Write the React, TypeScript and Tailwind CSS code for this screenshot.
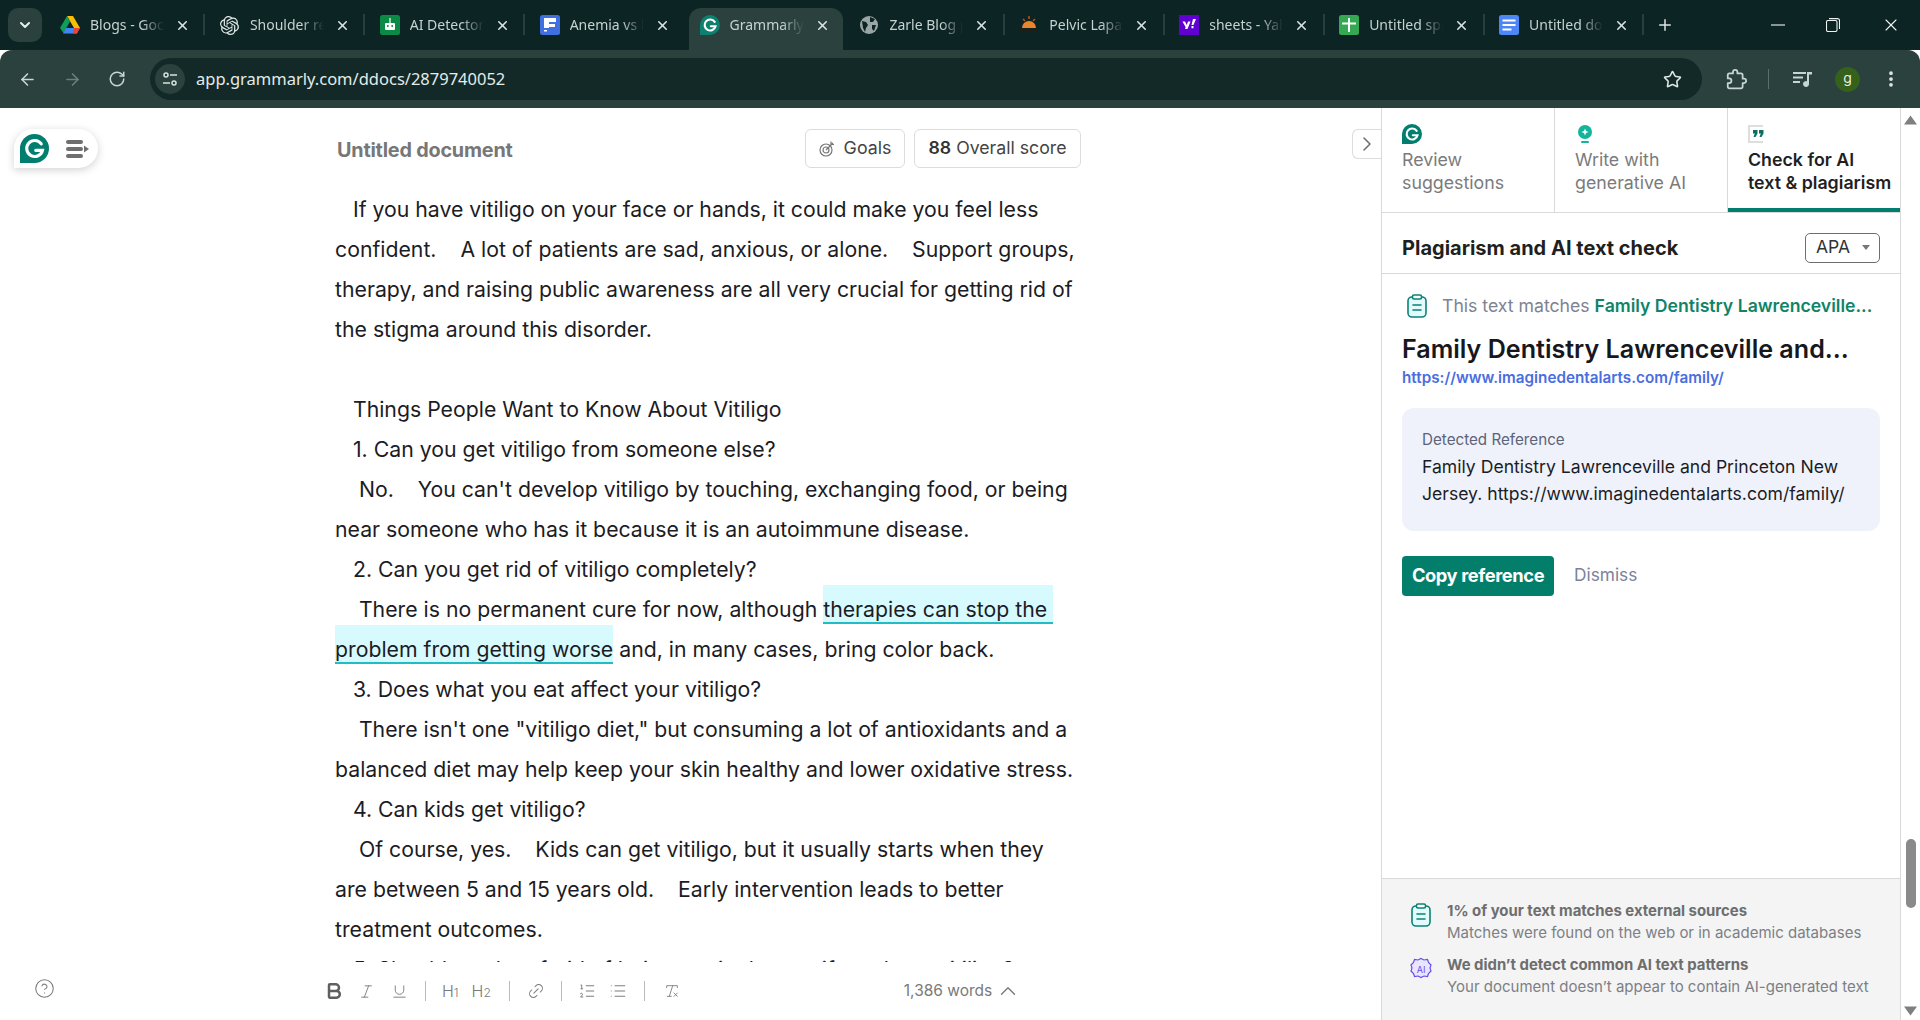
import { ArrowLeft, ArrowRight, ChevronDown, ChevronRight, ChevronUp, EllipsisVertical, Plus, RotateCw, Star, X, Bold, Italic, Underline, Link2, ListOrdered, List, RemoveFormatting, CircleHelp } from "lucide-react";
import { SiOpenai } from "react-icons/si";
import type { ReactNode } from "react";

function GrammarlyLogo({ size = 24, color = "#027e6f" }: { size?: number; color?: string }) {
  return (
    <svg width={size} height={size} viewBox="0 0 24 24">
      <path d="M12 0a12 12 0 1 1 0 24H0V12A12 12 0 0 1 12 0z" fill={color} />
      <path d="M17.6 8.2A6.6 6.6 0 1 0 18.6 13.5H13" fill="none" stroke="#fff" strokeWidth="2.6" strokeLinecap="round" />
    </svg>
  );
}

function DriveIcon() {
  return (
    <svg width="20" height="18" viewBox="0 0 20 18">
      <path d="M7 0h6l7 12h-6z" fill="#fbbc04" />
      <path d="M7 0l3 5.5L3.5 17 0 12z" fill="#0f9d58" />
      <path d="M6 12h14l-3.2 5.5H3z" fill="#4285f4" />
      <path d="M20 12l-3.2 5.5H13l1-5.5z" fill="#ea4335" />
    </svg>
  );
}

function DocIcon({ color, children }: { color: string; children: ReactNode }) {
  return (
    <svg width="20" height="20" viewBox="0 0 20 20">
      <rect width="20" height="20" rx="2.5" fill={color} />
      {children}
    </svg>
  );
}

function ClipboardIcon() {
  return (
    <svg width="20" height="24" viewBox="0 0 20 24" fill="#e2fbfb" stroke="#0b8277" strokeWidth="1.6">
      <rect x="1" y="3" width="18" height="20" rx="4" />
      <rect x="5.5" y="1" width="9" height="4" rx="1.5" fill="#fff" />
      <path d="M6 11h8M6 16h8" strokeLinecap="round" />
    </svg>
  );
}

const tabs: { title: string; icon: ReactNode; active?: boolean; hideSep?: boolean }[] = [
  { title: "Blogs - Google Drive", icon: <DriveIcon /> },
  { title: "Shoulder replacement", icon: <SiOpenai className="h-[19px] w-[19px] text-[#dfe7e5]" /> },
  {
    title: "AI Detector tool",
    icon: (
      <DocIcon color="#0b8a46">
        <rect x="5" y="8" width="10" height="7" rx="1" fill="#fff" />
        <rect x="9.4" y="3" width="1.2" height="5" fill="#fff" />
        <circle cx="7.8" cy="11" r="1" fill="#0b8a46" />
        <circle cx="12.2" cy="11" r="1" fill="#0b8a46" />
      </DocIcon>
    ),
  },
  {
    title: "Anemia vs leukemia",
    icon: (
      <DocIcon color="#3f6fe0">
        <path d="M4 3h12v4H9v2h6v3H9v1H4z" fill="#fff" />
        <rect x="4" y="15" width="3" height="1.5" fill="#fff" />
      </DocIcon>
    ),
    hideSep: true,
  },
  { title: "Grammarly document", icon: <GrammarlyLogo size={20} color="#0d8070" />, active: true, hideSep: true },
  {
    title: "Zarle Blog post",
    icon: (
      <svg width="20" height="20" viewBox="0 0 20 20">
        <circle cx="10" cy="10" r="9" fill="#9aa6a5" />
        <path d="M3 6l4 1 2 3-2 3-1 4-2-4zM11 2l5 2-2 3-3 0zM13 10l4 0-2 6-2-2z" fill="#0c2524" />
      </svg>
    ),
  },
  {
    title: "Pelvic Laparoscopy",
    icon: (
      <svg width="20" height="20" viewBox="0 0 20 20">
        <path d="M3 13a7 7 0 0 1 14 0z" fill="#e9862c" />
        <path d="M10 1v3M4 4l2 2M16 4l-2 2" stroke="#b5561c" strokeWidth="1.5" />
        <rect x="1" y="14" width="18" height="3" fill="#241b12" />
      </svg>
    ),
  },
  {
    title: "sheets - Yahoo Search",
    icon: (
      <svg width="20" height="20" viewBox="0 0 20 20">
        <rect width="20" height="20" fill="#5f01d1" />
        <path d="M3.5 6.5h2.6l1.5 3.6 1.5-3.6h2.5L8.5 14H6l.7-1.8z" fill="#fff" />
        <path d="M14 4h3l-2.5 6h-2zM12.5 11h2v2.3h-2z" fill="#fff" />
      </svg>
    ),
  },
  {
    title: "Untitled spreadsheet",
    icon: (
      <DocIcon color="#34a853">
        <path d="M9 3h2v4.5h6v2h-6V17H9V9.500H3v-2h6z" fill="#fff" />
      </DocIcon>
    ),
  },
  {
    title: "Untitled document",
    icon: (
      <DocIcon color="#4d86f7">
        <path d="M3.5 4.5h13v2h-13zM3.5 9h13v2h-13zM3.5 13.5h9v2h-9z" fill="#fff" />
      </DocIcon>
    ),
  },
];

function ChromeTab({ title, icon, active, showSep }: { title: string; icon: ReactNode; active?: boolean; showSep: boolean }) {
  return (
    <div
      className={`relative flex shrink-0 items-center pl-[11px] ${
        active ? "mr-[5.9px] mt-[8px] h-[42px] w-[154px] rounded-t-[12px] bg-[#2a413e] pb-[8px]" : "h-[50px] w-[159.9px]"
      }`}
    >
      <span className="flex w-[20px] items-center justify-center">{icon}</span>
      <span className="ml-[10px] w-[74px] overflow-hidden whitespace-nowrap text-[14px] leading-[20px] text-[#c6d3d0] [mask-image:linear-gradient(to_right,black_70%,transparent_100%)]">
        {title}
      </span>
      <X className="ml-[11px] h-[15px] w-[15px] text-[#dbe5e3]" strokeWidth={2.5} />
      {showSep && <span className="absolute right-[3.5px] top-[14px] h-[21px] w-[2px] bg-[#2a3f3d]" />}
    </div>
  );
}

const highlight = "border-b-2 border-[#24bcc4] bg-[#d6fafd] pt-[11px]";

const lines: ReactNode[] = [
  "   If you have vitiligo on your face or hands, it could make you feel less",
  "confident.    A lot of patients are sad, anxious, or alone.    Support groups,",
  "therapy, and raising public awareness are all very crucial for getting rid of",
  "the stigma around this disorder.",
  " ",
  "   Things People Want to Know About Vitiligo",
  "   1. Can you get vitiligo from someone else?",
  "    No.    You can't develop vitiligo by touching, exchanging food, or being",
  "near someone who has it because it is an autoimmune disease.",
  "   2. Can you get rid of vitiligo completely?",
  <>
    {"    There is no permanent cure for now, although "}
    <span className={highlight}>{"therapies can stop the "}</span>
  </>,
  <>
    <span className={highlight}>problem from getting worse</span>
    {" and, in many cases, bring color back."}
  </>,
  "   3. Does what you eat affect your vitiligo?",
  "    There isn't one \"vitiligo diet,\" but consuming a lot of antioxidants and a",
  "balanced diet may help keep your skin healthy and lower oxidative stress.",
  "   4. Can kids get vitiligo?",
  "    Of course, yes.    Kids can get vitiligo, but it usually starts when they",
  "are between 5 and 15 years old.    Early intervention leads to better",
  "treatment outcomes.",
  "   5. Should you be afraid of being out in the sun if you have vitiligo?",
];

function SideTab({ icon, first, second, active }: { icon: ReactNode; first: string; second: string; active?: boolean }) {
  return (
    <div
      className={`flex h-[104px] flex-col border-r border-[#d9d9d9] pl-[20px] pt-[16px] last:border-r-0 ${
        active ? "border-b-[4px] border-b-[#027e6f]" : ""
      }`}
    >
      <span className="flex h-[20px] items-center">{icon}</span>
      <span className={`mt-[4px] text-[17.8px] leading-[23px] ${active ? "font-semibold text-[#1f1f1f]" : "text-[#7b7b7b]"}`}>
        {first}
        <br />
        {second}
      </span>
    </div>
  );
}

function FooterItem({ icon, title, text }: { icon: ReactNode; title: string; text: string }) {
  return (
    <div className="flex items-start">
      <span className="mt-[2px] flex w-[24px] justify-center">{icon}</span>
      <div className="ml-[14px]">
        <div className="text-[14.9px] font-bold leading-[21px] text-[#6e6e6e]">{title}</div>
        <div className="text-[15px] leading-[22px] text-[#7c7f85]">{text}</div>
      </div>
    </div>
  );
}

export default function App() {
  return (
    <div className="flex h-[1020px] w-[1920px] flex-col overflow-hidden bg-white font-['Inter',sans-serif]">
      {/* browser tab strip */}
      <div className="flex h-[50px] shrink-0 items-start bg-[#0c2423] font-['Noto_Sans',sans-serif]">
        <div className="ml-[8px] mr-[7px] mt-[8px] flex h-[34px] w-[34px] shrink-0 items-center justify-center rounded-[10px] bg-[#2a413e]">
          <ChevronDown className="h-[16px] w-[16px] text-[#e6eeec]" strokeWidth={3} />
        </div>
        {tabs.map((t) => (
          <ChromeTab key={t.title} title={t.title} icon={t.icon} active={t.active} showSep={!t.active && !t.hideSep} />
        ))}
        <Plus className="ml-[8px] mt-[16px] h-[18px] w-[18px] text-[#dbe5e3]" strokeWidth={2} />
        <div className="ml-auto flex h-[50px] items-center text-[#eef3f2]">
          <svg className="mr-[41px]" width="14" height="14" viewBox="0 0 14 14" stroke="currentColor" strokeWidth="1.1">
            <path d="M0 7h14" />
          </svg>
          <svg className="mr-[41px]" width="14" height="14" viewBox="0 0 14 14" fill="none" stroke="currentColor" strokeWidth="1.1">
            <rect x="0.5" y="2.5" width="10.5" height="11" rx="1.5" />
            <path d="M3 .6h8.5a2 2 0 0 1 2 2V11" />
          </svg>
          <X className="mr-[19px] h-[20px] w-[20px]" strokeWidth={1.3} />
        </div>
      </div>

      {/* browser toolbar */}
      <div className="flex h-[58px] shrink-0 items-center rounded-t-[12px] bg-[#2a413e] text-[#c8d6d3]">
        <ArrowLeft className="ml-[18px] h-[19px] w-[19px]" strokeWidth={2} />
        <ArrowRight className="ml-[26px] h-[19px] w-[19px] text-[#6c817e]" strokeWidth={2} />
        <RotateCw className="ml-[26px] h-[18px] w-[18px]" strokeWidth={2} />
        <div className="ml-[24px] flex h-[42px] w-[1552px] items-center rounded-full bg-[#122927] pl-[5px]">
          <span className="flex h-[30px] w-[30px] items-center justify-center rounded-full bg-[#2a413e]">
            <svg width="16" height="16" viewBox="0 0 16 16" fill="none" stroke="#d6e2df" strokeWidth="1.5">
              <circle cx="4" cy="4" r="2" />
              <path d="M8 4h7M1 12h7" />
              <circle cx="12" cy="12" r="2" />
            </svg>
          </span>
          <span className="ml-[11px] font-['Noto_Sans',sans-serif] text-[16.5px] text-[#e2ecea]">
            app.grammarly.com/ddocs/2879740052
          </span>
          <Star className="ml-auto mr-[20px] h-[19px] w-[19px] text-[#dfe7e5]" strokeWidth={2} />
        </div>
        <svg className="ml-[24px]" width="21" height="21" viewBox="0 0 24 24" fill="none" stroke="currentColor" strokeWidth="2" strokeLinejoin="round">
          <path d="M20.5 11H19V7c0-1.1-.9-2-2-2h-4V3.5C13 2.12 11.88 1 10.5 1S8 2.12 8 3.5V5H4c-1.1 0-2 .9-2 2v3.8h1.500c1.49 0 2.7 1.21 2.7 2.7s-1.21 2.7-2.7 2.7H2V20c0 1.1.9 2 2 2h13c1.1 0 2-.9 2-2v-4h1.500c1.38 0 2.5-1.12 2.5-2.5S21.88 11 20.500 11z" />
        </svg>
        <span className="ml-[21px] h-[20px] w-[1px] bg-[#5a6e6b]" />
        <svg className="ml-[23px]" width="21" height="21" viewBox="0 0 21 21" fill="currentColor">
          <rect x="1" y="3" width="13" height="2" />
          <rect x="1" y="7.5" width="10" height="2" />
          <rect x="1" y="12" width="7" height="2" />
          <path d="M15 3h5v2.5h-3V15a3 3 0 1 1-2-2.800z" />
        </svg>
        <span className="ml-[22px] flex h-[25px] w-[25px] items-center justify-center rounded-full bg-[#35611b] pb-[3px] text-[14px] text-[#e8f0e4]">
          g
        </span>
        <EllipsisVertical className="ml-[21px] h-[20px] w-[20px] text-[#dfe7e5]" strokeWidth={2.5} />
      </div>

      <div className="relative flex min-h-0 flex-1">
        {/* floating grammarly pill */}
        <div className="absolute left-[14px] top-[21px] flex h-[39px] w-[84px] items-center rounded-[20px] rounded-bl-none bg-white pl-[6px] shadow-[0_2px_8px_rgba(0,0,0,0.18)]">
          <GrammarlyLogo size={29} />
          <svg className="ml-[17px]" width="24" height="18" viewBox="0 0 24 18" fill="#6f6f6f">
            <rect y="0" width="17" height="4" rx="2" />
            <rect y="7" width="17" height="4" rx="2" />
            <rect y="14" width="17" height="4" rx="2" />
            <path d="M18 5.5l5 3.5-5 3.5z" />
          </svg>
        </div>

        {/* editor */}
        <div className="relative flex min-w-0 flex-1 flex-col">
          <div className="absolute right-0 top-[21px] flex h-[30px] w-[29px] items-center justify-center rounded-l-[6px] border border-r-0 border-[#dcdcdc] bg-white">
            <ChevronRight className="h-[24px] w-[24px] text-[#6b6b6b]" strokeWidth={1.5} />
          </div>
          <div className="min-h-0 flex-1 overflow-hidden pl-[335px]">
            <div className="flex h-[81px] w-[746px] items-start justify-between pl-[2px] pt-[21px]">
              <span className="mt-[9px] text-[19.8px] font-bold leading-[24px] tracking-[-0.2px] text-[#777]">Untitled document</span>
              <div className="flex gap-[9px]">
                <div className="flex h-[39px] w-[100px] items-center justify-center rounded-[6px] border border-[#dcdcdc] text-[17.8px] text-[#444]">
                  <svg className="mr-[9px]" width="16" height="16" viewBox="0 0 16 16" fill="none" stroke="#777" strokeWidth="1.2">
                    <circle cx="7" cy="9" r="6" />
                    <circle cx="7" cy="9" r="3" />
                    <path d="M7 9l7-7M12 0.5v3h3" />
                  </svg>
                  Goals
                </div>
                <div className="flex h-[39px] w-[167px] items-center justify-center rounded-[6px] border border-[#dcdcdc] text-[17.7px] text-[#444]">
                  <span className="mr-[5px] font-semibold text-[#333]">88</span>Overall score
                </div>
              </div>
            </div>
            <div className="whitespace-pre text-[21.25px] leading-[40px] text-[#1c1c24]">
              {lines.map((line, i) => (
                <div key={i} className="h-[40px]">
                  {line}
                </div>
              ))}
            </div>
          </div>
          {/* bottom format bar */}
          <div className="flex h-[58px] shrink-0 items-center bg-white text-[#7a7a7a]">
            <CircleHelp className="mb-[5px] ml-[34px] h-[21px] w-[21px]" strokeWidth={1.2} />
            <Bold className="ml-[269px] h-[20px] w-[20px] text-[#5f5f5f]" strokeWidth={3} />
            <Italic className="ml-[14px] h-[17px] w-[17px]" strokeWidth={1.3} />
            <Underline className="ml-[16px] h-[17px] w-[17px]" strokeWidth={1.3} />
            <span className="ml-[17px] h-[20px] w-px bg-[#bbb]" />
            <span className="ml-[16px] text-[16px] font-light">
              H<span className="text-[12px]">1</span>
            </span>
            <span className="ml-[13px] text-[16px] font-light">
              H<span className="text-[12px]">2</span>
            </span>
            <span className="ml-[18px] h-[20px] w-px bg-[#bbb]" />
            <Link2 className="ml-[17px] h-[18px] w-[18px] -rotate-45" strokeWidth={1.3} />
            <span className="ml-[16px] h-[20px] w-px bg-[#bbb]" />
            <ListOrdered className="ml-[16px] h-[18px] w-[18px]" strokeWidth={1.3} />
            <List className="ml-[13px] h-[18px] w-[18px]" strokeWidth={1.3} />
            <span className="ml-[17px] h-[20px] w-px bg-[#bbb]" />
            <RemoveFormatting className="ml-[19px] h-[16px] w-[16px]" strokeWidth={1.3} />
            <span className="ml-[224px] text-[15.5px]">1,386 words</span>
            <ChevronUp className="ml-[3px] h-[26px] w-[26px]" strokeWidth={1.3} />
          </div>
        </div>

        {/* grammarly sidebar */}
        <div className="flex w-[519px] shrink-0 flex-col border-l border-[#d9d9d9]">
          <div className="grid h-[105px] shrink-0 grid-cols-[173px_173px_1fr] border-b border-[#d9d9d9]">
            <SideTab icon={<GrammarlyLogo size={20} />} first="Review" second="suggestions" />
            <SideTab
              icon={
                <svg width="20" height="20" viewBox="0 0 20 20">
                  <circle cx="10" cy="8" r="7" fill="#11b59b" />
                  <path d="M10 4.5l1 2.5 2.5 1-2.5 1-1 2.5-1-2.5-2.5-1 2.5-1z" fill="#fff" />
                  <rect x="6" y="17" width="8" height="2" rx="1" fill="#11b59b" />
                </svg>
              }
              first="Write with"
              second="generative AI"
            />
            <SideTab
              icon={
                <svg width="17" height="18" viewBox="0 0 17 18">
                  <path d="M0 0h15v2H2v14h13v2H0z" fill="#dedede" />
                  <path d="M5 5h4.5v3.5L7.5 12H5.5l1.3-3.5H5zM11 5h4.5v3.5L13.5 12h-2l1.3-3.5H11z" fill="#0a6f62" />
                </svg>
              }
              first="Check for AI"
              second="text & plagiarism"
              active
            />
          </div>
          <div className="flex h-[61px] shrink-0 items-center justify-between border-b border-[#d9d9d9] pl-[20px] pr-[20px] pt-[9px]">
            <span className="text-[20px] font-bold text-[#1f1f1f]">Plagiarism and AI text check</span>
            <div className="flex h-[30px] w-[75px] items-center rounded-[5px] border border-[#6e6e6e] pl-[10px] text-[17.5px] text-[#333]">
              APA
              <span className="ml-[12px] h-0 w-0 border-x-[4px] border-t-[5px] border-x-transparent border-t-[#777]" />
            </div>
          </div>
          <div className="min-h-0 flex-1 px-[20px]">
            <div className="mt-[20px] flex h-[24px] items-center">
              <span className="ml-[5px]">
                <ClipboardIcon />
              </span>
              <span className="ml-[15px] whitespace-nowrap text-[17.65px] text-[#7e8392]">
                This text matches <span className="font-semibold text-[#0f8468]">Family Dentistry Lawrenceville...</span>
              </span>
            </div>
            <div className="mt-[14px] whitespace-nowrap text-[25.1px] font-semibold leading-[34px] text-[#17181c]">
              Family Dentistry Lawrenceville and...
            </div>
            <div className="mt-[2px] text-[15.25px] font-semibold leading-[20px] text-[#4a6ee0]">
              https://www.imaginedentalarts.com/family/
            </div>
            <div className="mt-[20px] h-[123px] rounded-[12px] bg-[#eff2fb] px-[20px] pt-[22px]">
              <div className="text-[15.2px] leading-[20px] text-[#5c6378]">Detected Reference</div>
              <div className="mt-[4px] text-[17.6px] leading-[26.5px] text-[#1c1c24]">
                Family Dentistry Lawrenceville and Princeton New
                <br />
                Jersey. https://www.imaginedentalarts.com/family/
              </div>
            </div>
            <div className="mt-[25px] flex items-center">
              <div className="flex h-[40px] w-[152px] items-center justify-center rounded-[4px] bg-[#027e6b] text-[18.3px] font-bold tracking-[-0.4px] text-white">
                Copy reference
              </div>
              <span className="mb-[2px] ml-[20px] text-[17.3px] text-[#7c8299]">Dismiss</span>
            </div>
          </div>
          <div className="flex h-[142px] shrink-0 flex-col gap-[11px] border-t border-[#d9d9d9] bg-[#f4f4f4] pl-[27px] pt-[22px]">
            <FooterItem icon={<ClipboardIcon />} title="1% of your text matches external sources" text="Matches were found on the web or in academic databases" />
            <FooterItem
              icon={
                <svg width="24" height="24" viewBox="0 0 24 24" fill="#e9e6ff" stroke="#6a4bea" strokeWidth="1.2">
                  <path d="M12 1.5l3 1.5 3.5-.5 1 3 2.5 2.5-1 3 1 3-2.5 2.5-1 3-3.5-.5-3 1.5-3-1.5-3.5.5-1-3L2 14l1-3-1-3 2.5-2.5 1-3 3.5.5z" />
                  <text x="12" y="15.5" textAnchor="middle" fontSize="9" fill="#6a4bea" stroke="none">
                    AI
                  </text>
                </svg>
              }
              title="We didn’t detect common AI text patterns"
              text="Your document doesn’t appear to contain AI-generated text"
            />
          </div>
        </div>

        {/* page scrollbar */}
        <div className="flex w-[20px] shrink-0 flex-col items-center border-l border-[#d9d9d9] bg-white pt-[7px]">
          <svg className="shrink-0" width="13" height="10" viewBox="0 0 13 10" fill="#7f7f7f">
            <path d="M6.5 0.5L13 9.5H0z" />
          </svg>
          <span className="ml-[1px] mt-[714px] h-[69px] w-[10px] shrink-0 rounded-full bg-[#8a8a8a]" />
          <svg className="mt-[98px] shrink-0" width="13" height="10" viewBox="0 0 13 10" fill="#7f7f7f">
            <path d="M0 0.5h13L6.5 9.5z" />
          </svg>
        </div>
      </div>
    </div>
  );
}
